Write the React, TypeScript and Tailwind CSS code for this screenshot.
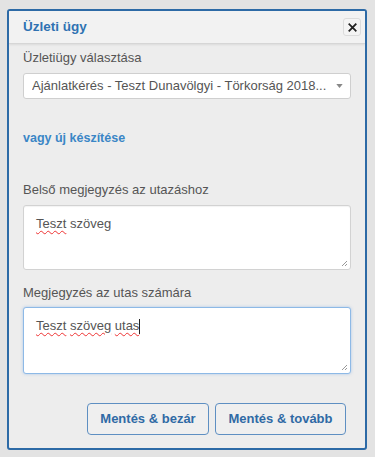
import React from "react";

export default function App() {
  const font = { fontFamily: '"Liberation Sans", Arial, sans-serif' };
  const wavy = "underline decoration-wavy decoration-[#e33] decoration-1 underline-offset-2";
  return (
    <div className="w-[375px] h-[457px] bg-[#e3e3e3] pt-[9px] pl-[7px]" style={font}>
      <div className="w-[360px] h-[441px] border-2 border-[#2d6aa6] rounded-[3px] bg-[#ededed] flex flex-col overflow-hidden">
        <div className="h-[33px] shrink-0 bg-[#f2f2f2] border-b border-[#d6d6d6] shadow-[0_1px_2px_rgba(0,0,0,0.08)] flex items-center justify-between pl-[14px] pr-[4px]">
          <span className="text-[13.5px] font-bold text-[#2f72b2]">Üzleti ügy</span>
          <button className="w-[18px] h-[18px] rounded-[3px] border border-[#dcdcdc] bg-[#f4f4f4] flex items-center justify-center">
            <svg width="9" height="9" viewBox="0 0 10 10">
              <path d="M1.5 1.5 L8.5 8.5 M8.5 1.5 L1.5 8.5" stroke="#222" strokeWidth="2" strokeLinecap="square" />
            </svg>
          </button>
        </div>
        <div className="px-[14px] flex flex-col">
          <div className="mt-[5px] text-[13px] text-[#555] leading-[18px]">Üzletiügy választása</div>
          <div className="mt-[6px] h-[26px] w-[328px] bg-white border border-[#cfcfcf] rounded-[3px] flex items-center pl-[8px] pr-[7px] justify-between">
            <span className="text-[13px] text-[#555] whitespace-nowrap overflow-hidden">Ajánlatkérés - Teszt Dunavölgyi - Törkorság 2018...</span>
            <svg className="shrink-0" width="7" height="4" viewBox="0 0 8 5"><path d="M0 0 L8 0 L4 5 Z" fill="#888" /></svg>
          </div>
          <div className="mt-[30px] text-[12.5px] font-bold text-[#3a86c6] leading-[18px]">vagy új készítése</div>
          <div className="mt-[34px] text-[13px] text-[#555] leading-[18px]">Belső megjegyzés az utazáshoz</div>
          <div className="mt-[6px] relative h-[65px] w-[328px] shrink-0 bg-white border border-[#d2d2d2] rounded-[3px] shadow-[inset_0_1px_1px_rgba(0,0,0,0.05)] pl-[12px] pt-[5px]">
            <span className="text-[13px] text-[#555]"><span className={wavy}>Teszt</span> szöveg</span>
            <svg className="absolute right-[2px] bottom-[2px]" width="8" height="8" viewBox="0 0 8 8"><path d="M7 2 L2 7 M7 5 L5 7" stroke="#999" strokeWidth="1" /></svg>
          </div>
          <div className="mt-[14px] text-[13px] text-[#555] leading-[18px]">Megjegyzés az utas számára</div>
          <div className="mt-[5px] relative h-[67px] w-[328px] shrink-0 bg-white border border-[#8db9e6] rounded-[3px] shadow-[0_0_3px_rgba(102,160,230,0.5)] pl-[12px] pt-[5px]">
            <span className="text-[13px] text-[#555]"><span className={wavy}>Teszt</span> <span className={wavy}>szöveg</span> <span className={wavy}>utas</span><span className="inline-block w-[1px] h-[15px] bg-[#222] align-middle"></span></span>
            <svg className="absolute right-[2px] bottom-[2px]" width="8" height="8" viewBox="0 0 8 8"><path d="M7 2 L2 7 M7 5 L5 7" stroke="#999" strokeWidth="1" /></svg>
          </div>
          <div className="mt-[29px] flex justify-end gap-[6px] pr-[5px]">
            <button className="h-[32px] w-[122px] border border-[#5e8fc2] rounded-[4px] bg-[#efefef] text-[13px] font-bold text-[#2f6aa5]">Mentés &amp; bezár</button>
            <button className="h-[32px] w-[131px] border border-[#5e8fc2] rounded-[4px] bg-[#efefef] text-[13px] font-bold text-[#2f6aa5]">Mentés &amp; tovább</button>
          </div>
        </div>
      </div>
    </div>
  );
}
